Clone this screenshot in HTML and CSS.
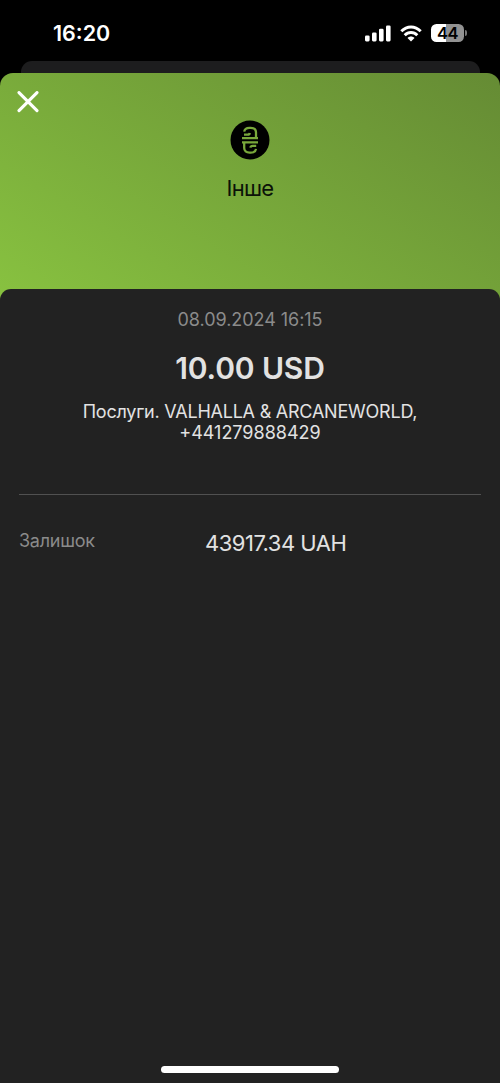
FILE: index.html
```html
<!DOCTYPE html>
<html lang="uk">
<head>
<meta charset="utf-8">
<meta name="viewport" content="width=device-width, initial-scale=1">
<title>Інше</title>
<link rel="stylesheet" href="styles.css">
</head>
<body>
<div class="screen">
  <header class="status">
    <span class="clock">16:20</span>
    <div class="indicators">
      <svg class="signal" width="26" height="17" viewBox="0 0 26 17" fill="#fff">
        <rect x="0" y="10.4" width="4.6" height="6" rx="1.3"/>
        <rect x="7" y="7.4" width="4.6" height="9" rx="1.3"/>
        <rect x="14" y="3.8" width="4.6" height="12.6" rx="1.3"/>
        <rect x="21" y="0.4" width="4.6" height="16" rx="1.3"/>
      </svg>
      <svg class="wifi" width="22" height="17" viewBox="0 0 22 17" fill="none" stroke="#fff" stroke-width="2.9">
        <path d="M1.3 6.3C7 .6 15 .6 20.7 6.3"/>
        <path d="M4.7 10.2C8.3 6.5 13.7 6.5 17.3 10.2"/>
        <path d="M11 16.6 7.5 13C9.4 11 12.6 11 14.5 13Z" fill="#fff" stroke="none"/>
      </svg>
      <div class="battery">
        <span class="battery-body">44</span>
        <span class="battery-cap"></span>
      </div>
    </div>
  </header>
  <div class="back-sheet"></div>
  <main class="sheet">
    <section class="hero">
      <svg class="close" width="22" height="22" viewBox="0 0 22 22" fill="none" stroke="#fff" stroke-width="3.1" stroke-linecap="round">
        <path d="M2 1.6 20 19.6M20 1.6 2 19.6"/>
      </svg>
      <div class="category">
        <svg class="coin" width="40" height="40" viewBox="0 0 40 40" fill="none">
          <circle cx="20" cy="20" r="19.5" fill="#000"/>
          <g stroke="#79a83b" stroke-width="2.3">
            <path d="M14.2 11.6C14.6 9 16.4 7.8 19.4 7.8H20.6C24 7.8 26 9.5 26 12.4V17.6M14 14.7H17.6C18.9 14.7 19.6 14.2 19.8 13"/>
            <path d="M26 28.8C25.6 31.4 23.8 32.6 20.8 32.6H19.6C16.2 32.6 14.2 30.9 14.2 28V22.8M26.2 25.9H22.6C21.3 25.9 20.6 26.4 20.4 27.6"/>
            <path d="M12 18.1H28M12 22.3H28"/>
          </g>
        </svg>
        <h1 class="category-name">Інше</h1>
      </div>
    </section>
    <section class="details">
      <div class="date">08.09.2024 16:15</div>
      <div class="amount">10.00 USD</div>
      <p class="description"><span class="merchant">Послуги. VALHALLA &amp; ARCANEWORLD,</span><br><span class="phone">+441279888429</span></p>
      <div class="balance">
        <span class="balance-label">Залишок</span>
        <span class="balance-value">43917.34 UAH</span>
      </div>
      <div class="home-bar"></div>
    </section>
  </main>
</div>
</body>
</html>
```
FILE: styles.css
```css
* { box-sizing: border-box; }
body {
  margin: 0;
  background: #000;
  font-family: Inter, "Liberation Sans", sans-serif;
}
.screen {
  width: 500px;
  height: 1083px;
  display: flex;
  flex-direction: column;
  overflow: hidden;
}
.status {
  height: 61px;
  padding: 20px 33px 0 53px;
  display: flex;
  justify-content: space-between;
  align-items: flex-start;
}
.clock {
  color: #fff;
  font-size: 21.5px;
  line-height: 27px;
  font-weight: 600;
}
.indicators {
  display: flex;
  align-items: center;
  padding-top: 4px;
}
.signal { margin-right: 9px; }
.wifi { margin-right: 9px; }
.battery { display: flex; align-items: center; gap: 1px; }
.battery-body {
  width: 33px;
  height: 18px;
  border-radius: 5.5px;
  background: linear-gradient(90deg, #fff 44%, #929292 44%);
  color: #000;
  font-size: 16.5px;
  line-height: 18px;
  font-weight: 600;
  letter-spacing: -0.4px;
  text-align: center;
}
.battery-cap {
  width: 2px;
  height: 6px;
  border-radius: 0 2px 2px 0;
  background: #777;
}
.back-sheet {
  height: 12px;
  margin: 0 20px 0 21px;
  border-radius: 11px 11px 0 0;
  background: #1d1d1e;
}
.sheet {
  flex: 1;
  display: flex;
  flex-direction: column;
}
.hero {
  height: 228px;
  padding: 18px 17px;
  border-radius: 13px 13px 0 0;
  background: linear-gradient(32deg, #88c240, #658b34);
}
.close { display: block; }
.category {
  display: flex;
  flex-direction: column;
  align-items: center;
  padding-top: 7px;
}
.coin { display: block; }
.category-name {
  margin: 15px 0 0;
  color: #0b1208;
  font-size: 22px;
  line-height: 27px;
  font-weight: 400;
  letter-spacing: -0.75px;
}
.details {
  flex: 1;
  display: flex;
  flex-direction: column;
  align-items: center;
  margin-top: -12px;
  padding: 19px 19px 10px;
  border-radius: 11px 11px 0 0;
  background: #222;
  color: #e2e2e2;
}
.date {
  color: #8b8b8b;
  font-size: 18px;
  line-height: 23px;
  letter-spacing: -0.05px;
}
.amount {
  margin-top: 19px;
  font-size: 30px;
  line-height: 36px;
  font-weight: 600;
  letter-spacing: -0.15px;
}
.description {
  margin: 15px 0 0;
  font-size: 18px;
  line-height: 21px;
  text-align: center;
  white-space: nowrap;
}
.merchant { letter-spacing: -0.23px; }
.balance {
  width: 100%;
  margin-top: 51px;
  padding: 35px 0 0;
  border-top: 1px solid #515151;
  display: grid;
  grid-template-columns: 186px 1fr;
  align-items: start;
}
.balance-label {
  color: #8b8b8b;
  font-size: 18px;
  line-height: 22px;
  letter-spacing: -0.25px;
}
.balance-value {
  font-size: 22px;
  line-height: 27px;
  letter-spacing: -0.5px;
}
.home-bar {
  width: 178px;
  height: 7px;
  margin-top: auto;
  border-radius: 4px;
  background: #fff;
}
```
